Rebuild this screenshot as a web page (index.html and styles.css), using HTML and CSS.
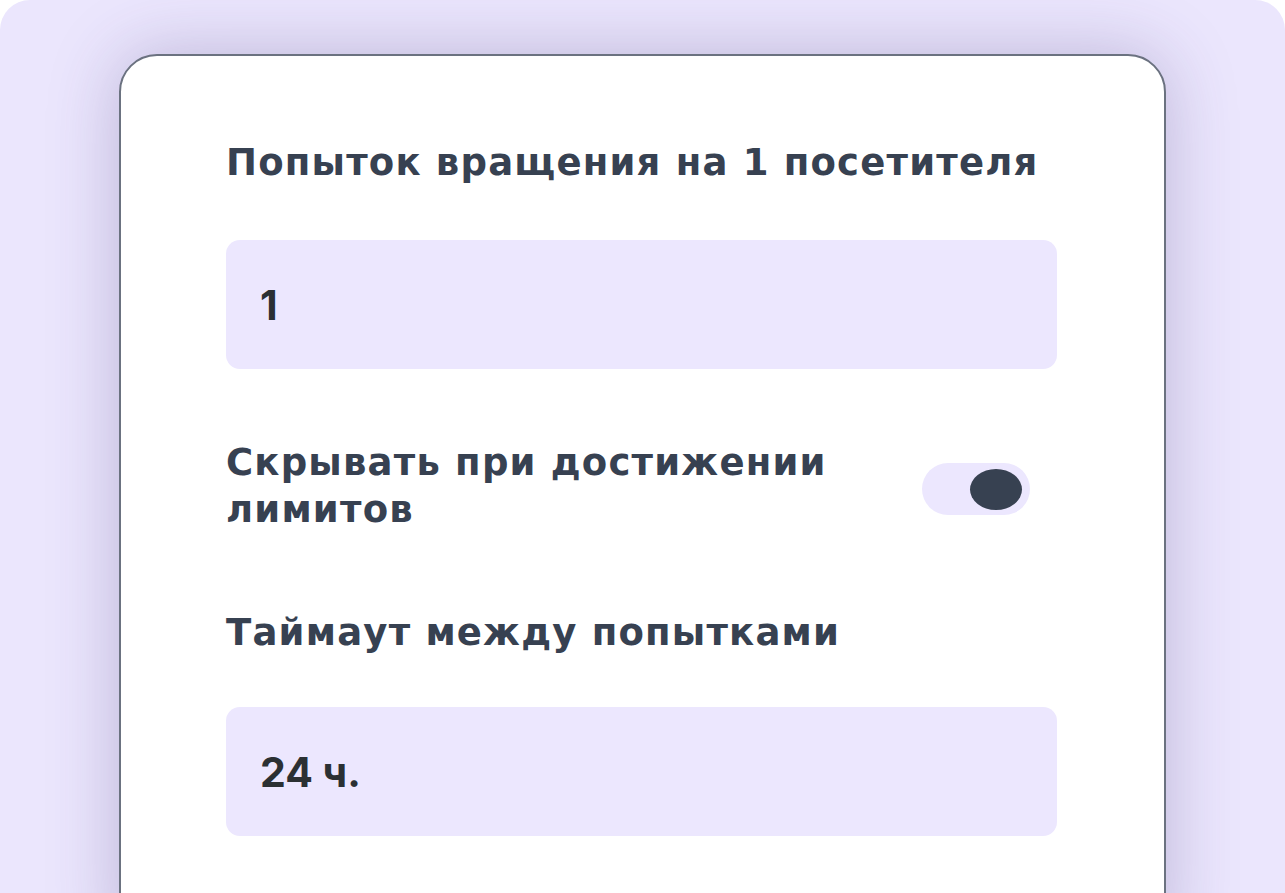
FILE: index.html
```html
<!DOCTYPE html>
<html lang="ru">
<head>
<meta charset="utf-8">
<title>Настройки</title>
<link rel="stylesheet" href="styles.css">
</head>
<body>
<div class="frame">
  <div class="card">
    <div class="label label-first">Попыток вращения на 1 посетителя</div>
    <div class="field">1</div>
    <div class="toggle-row">
      <div class="label toggle-label">Скрывать при достижении лимитов</div>
      <div class="toggle"><div class="knob"></div></div>
    </div>
    <div class="label label-third">Таймаут между попытками</div>
    <div class="field field-second">24 ч.</div>
  </div>
</div>
</body>
</html>
```
FILE: styles.css
```css
html, body {
  margin: 0;
  padding: 0;
  background: #ffffff;
  overflow: hidden;
}
.frame {
  width: 1285px;
  height: 893px;
  box-sizing: border-box;
  border-radius: 30px 30px 0 0;
  background: #ebe6fd;
  padding: 54px 119px 0 119px;
  overflow: hidden;
}
.card {
  box-sizing: border-box;
  width: 1047px;
  height: 900px;
  background: #ffffff;
  border: 2px solid #6b7280;
  border-radius: 38px;
  padding: 83px 107px 0 105px;
  box-shadow: 0 0 70px rgba(70, 55, 120, 0.28);
  font-family: Inter, "Open Sans", sans-serif;
}
.label {
  font-family: "DejaVu Sans", Inter, sans-serif;
  font-size: 37px;
  line-height: 47px;
  font-weight: 700;
  letter-spacing: 1.2px;
  color: #374151;
}
.field {
  margin-top: 54px;
  height: 129px;
  background: #ece7fe;
  border-radius: 14px;
  display: flex;
  align-items: center;
  padding-left: 34px;
  font-size: 41px;
  font-weight: 700;
  color: #2b3033;
}
.toggle-row {
  margin-top: 70px;
  display: flex;
  align-items: center;
  justify-content: space-between;
}
.toggle-label {
  max-width: 640px;
}
.toggle {
  width: 108px;
  height: 52px;
  margin-top: 6px;
  margin-right: 27px;
  border-radius: 26px;
  background: #ece7fe;
  display: flex;
  align-items: center;
  justify-content: flex-end;
  padding-right: 8px;
  box-sizing: border-box;
}
.knob {
  width: 52px;
  height: 41px;
  border-radius: 50%;
  background: #374151;
}
.label-third {
  margin-top: 76px;
}
.field-second {
  margin-top: 51px;
}
```
